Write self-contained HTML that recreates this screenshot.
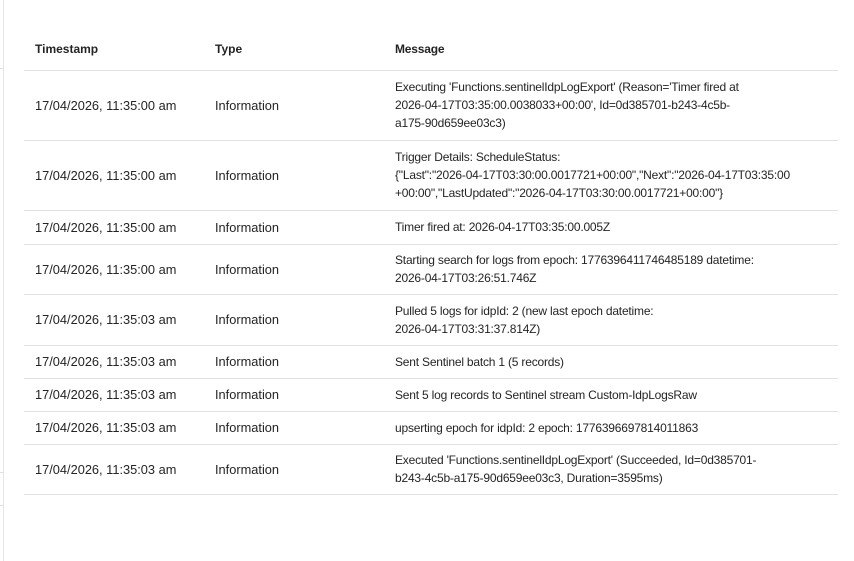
<!DOCTYPE html>
<html><head><meta charset="utf-8"><style>
body{margin:0;width:854px;height:561px;background:#fff;font-family:"Liberation Sans",sans-serif;font-size:12px;color:#242424;position:relative;overflow:hidden}
.vl{position:absolute;left:3px;top:0;width:1px;height:561px;background:#e6e6e6}
.tk{position:absolute;left:0;width:3px;height:1px;background:#e0e0e0}
.r{position:absolute;left:24px;width:814px;border-bottom:1px solid #e1e1e1;display:flex;align-items:center}
.c1{position:absolute;left:11px;font-size:12.8px}.c2{position:absolute;left:191px;font-size:12.8px}.c3{position:absolute;left:371px;line-height:18px;white-space:nowrap;letter-spacing:-0.2px}
.h{font-weight:bold;color:#242424}
.h span{font-size:12px;padding-top:4px}
</style></head><body>
<div class="vl"></div><div class="tk" style="top:68px"></div><div class="tk" style="top:472px"></div><div class="tk" style="top:505px"></div>
<div class="r h" style="top:24px;height:46px"><span class="c1">Timestamp</span><span class="c2">Type</span><span class="c3">Message</span></div>
<div class="r" style="top:70px;height:70px"><span class="c1">17/04/2026, 11:35:00 am</span><span class="c2">Information</span><span class="c3">Executing 'Functions.sentinelIdpLogExport' (Reason='Timer fired at<br>2026-04-17T03:35:00.0038033+00:00', Id=0d385701-b243-4c5b-<br>a175-90d659ee03c3)</span></div>
<div class="r" style="top:140px;height:70px"><span class="c1">17/04/2026, 11:35:00 am</span><span class="c2">Information</span><span class="c3">Trigger Details: ScheduleStatus:<br>{"Last":"2026-04-17T03:30:00.0017721+00:00","Next":"2026-04-17T03:35:00<br>+00:00","LastUpdated":"2026-04-17T03:30:00.0017721+00:00"}</span></div>
<div class="r" style="top:210px;height:34px"><span class="c1">17/04/2026, 11:35:00 am</span><span class="c2">Information</span><span class="c3">Timer fired at: 2026-04-17T03:35:00.005Z</span></div>
<div class="r" style="top:244px;height:50px"><span class="c1">17/04/2026, 11:35:00 am</span><span class="c2">Information</span><span class="c3">Starting search for logs from epoch: 1776396411746485189 datetime:<br>2026-04-17T03:26:51.746Z</span></div>
<div class="r" style="top:294px;height:51px"><span class="c1">17/04/2026, 11:35:03 am</span><span class="c2">Information</span><span class="c3">Pulled 5 logs for idpId: 2 (new last epoch datetime:<br>2026-04-17T03:31:37.814Z)</span></div>
<div class="r" style="top:345px;height:33px"><span class="c1">17/04/2026, 11:35:03 am</span><span class="c2">Information</span><span class="c3">Sent Sentinel batch 1 (5 records)</span></div>
<div class="r" style="top:378px;height:33px"><span class="c1">17/04/2026, 11:35:03 am</span><span class="c2">Information</span><span class="c3">Sent 5 log records to Sentinel stream Custom-IdpLogsRaw</span></div>
<div class="r" style="top:411px;height:33px"><span class="c1">17/04/2026, 11:35:03 am</span><span class="c2">Information</span><span class="c3">upserting epoch for idpId: 2 epoch: 1776396697814011863</span></div>
<div class="r" style="top:444px;height:50px"><span class="c1">17/04/2026, 11:35:03 am</span><span class="c2">Information</span><span class="c3">Executed 'Functions.sentinelIdpLogExport' (Succeeded, Id=0d385701-<br>b243-4c5b-a175-90d659ee03c3, Duration=3595ms)</span></div>
</body></html>
